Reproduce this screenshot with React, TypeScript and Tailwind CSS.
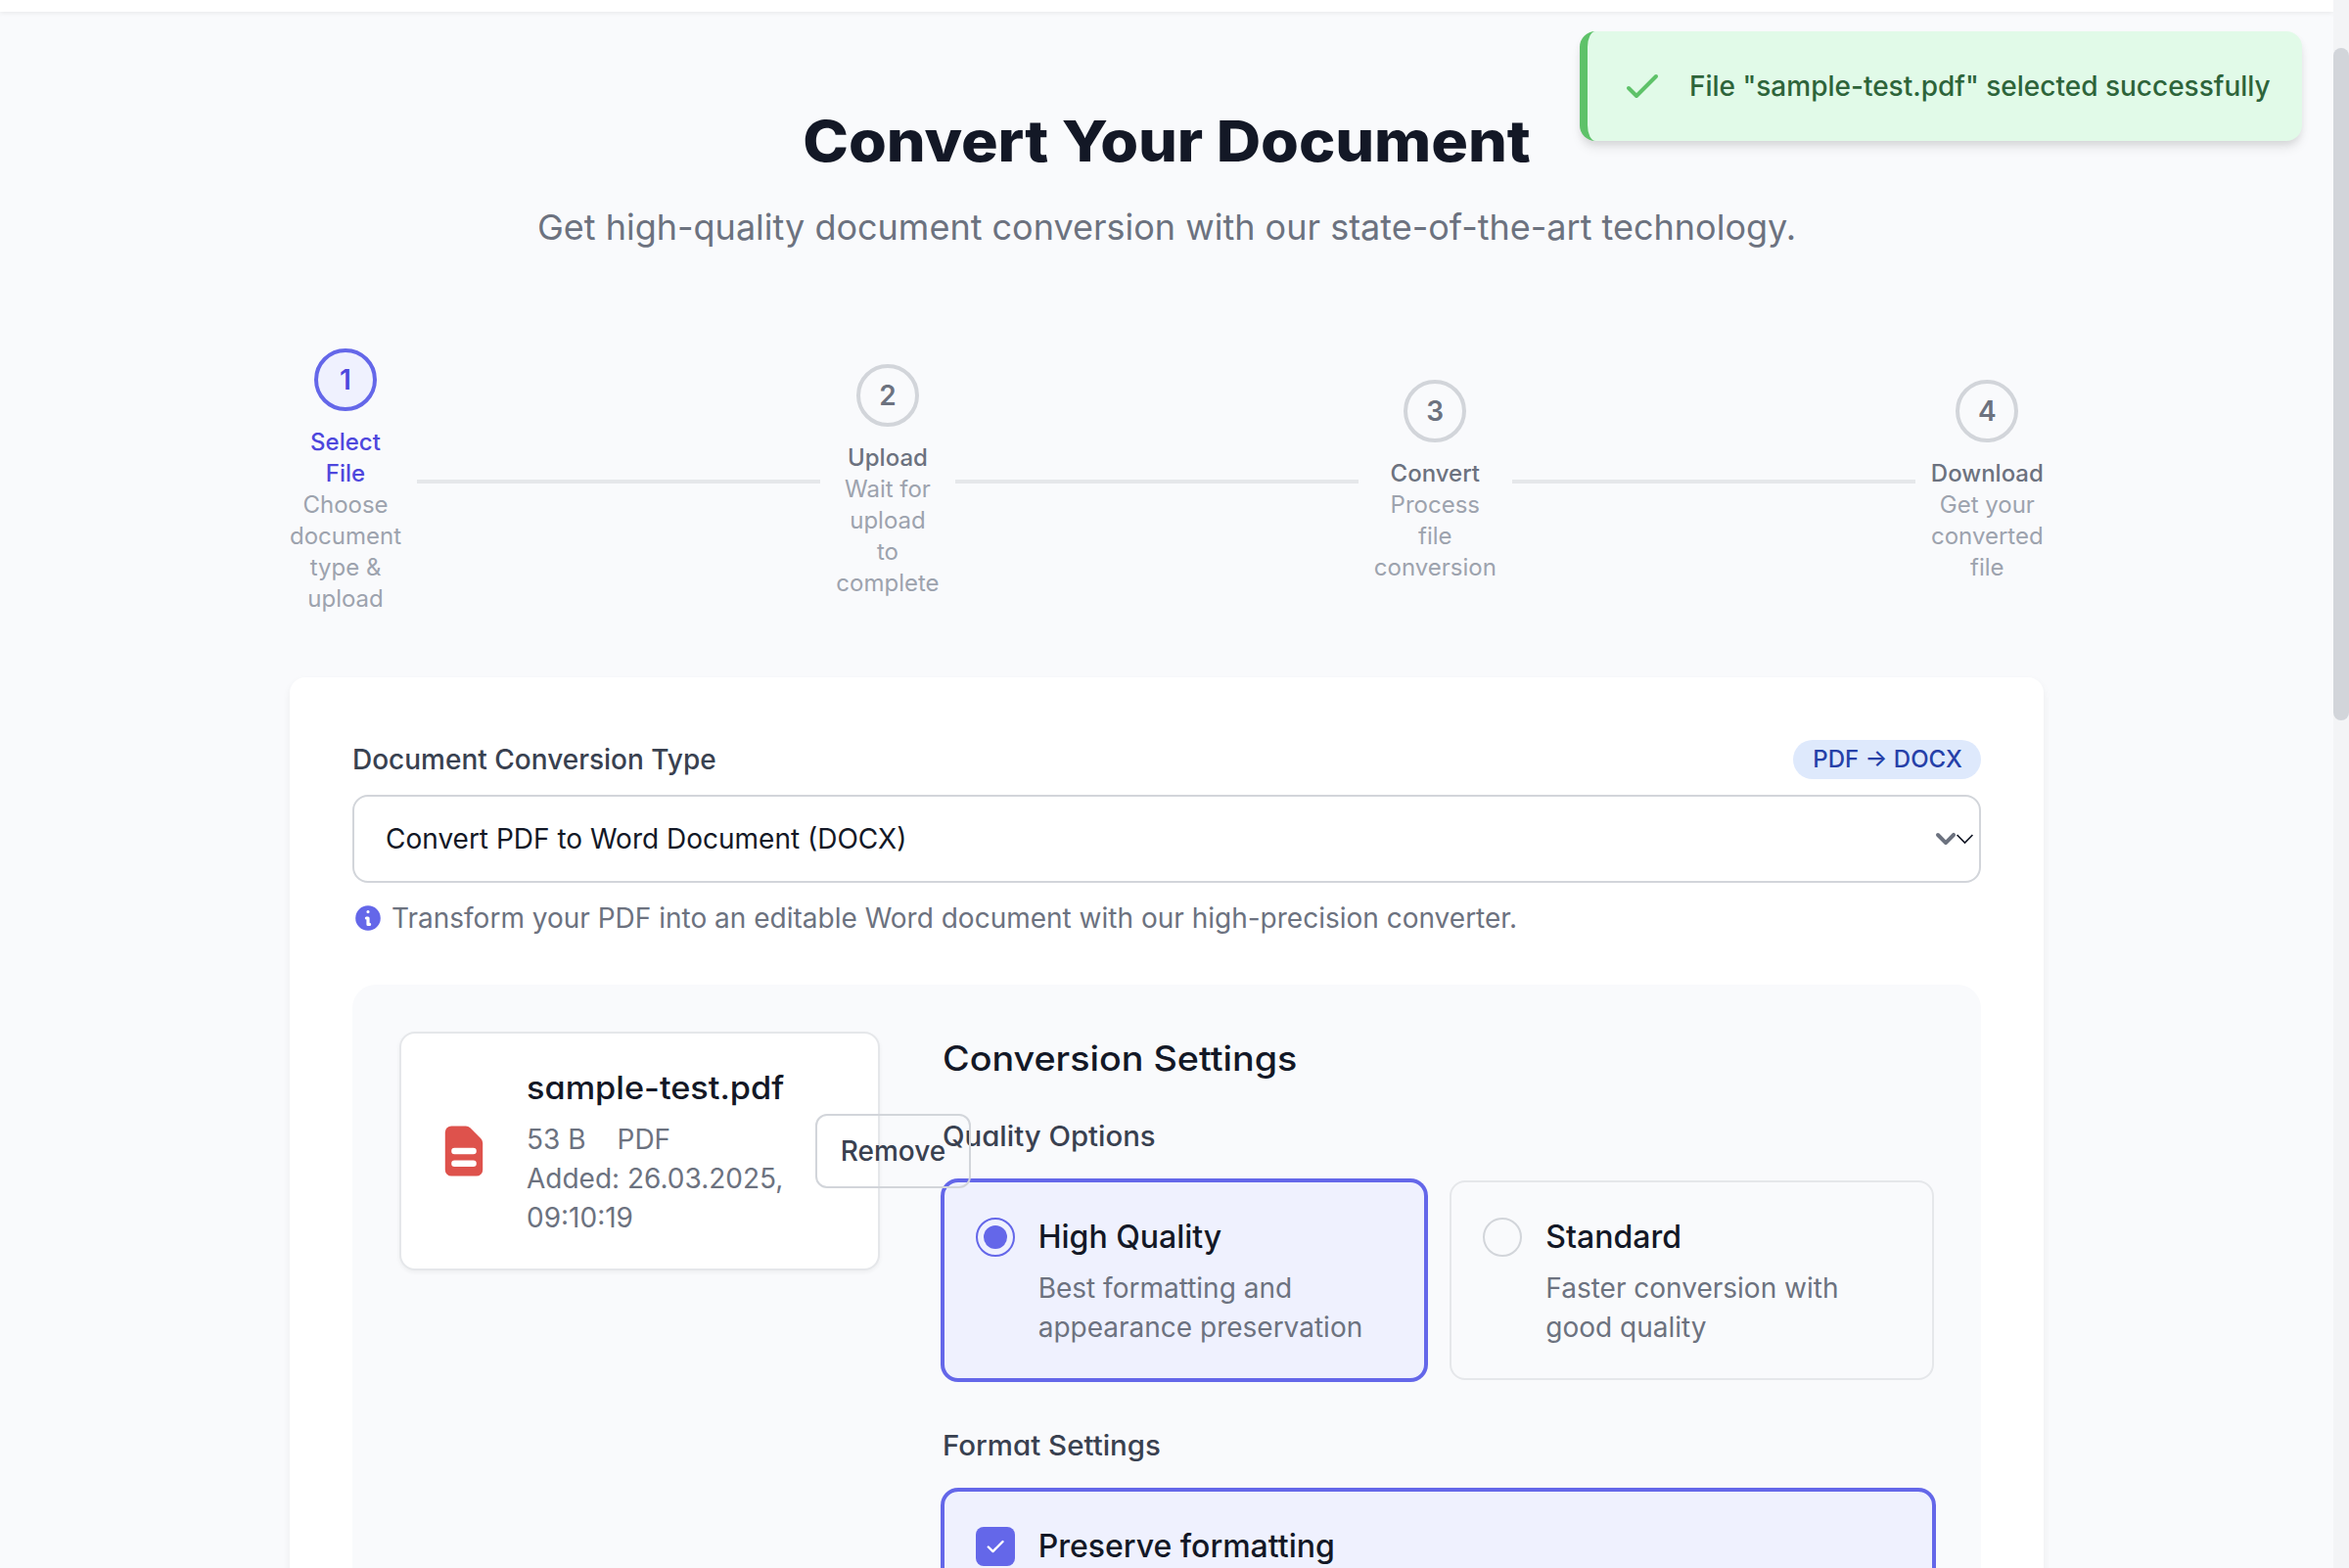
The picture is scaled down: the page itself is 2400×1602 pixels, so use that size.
import React from "react";

type Step = {
  id: number;
  label: string[];
  description: string[];
  active?: boolean;
  width: string;
};

const steps: Step[] = [
  { id: 1, label: ["Select", "File"], description: ["Choose", "document", "type &", "upload"], active: true, width: "w-[114px]" },
  { id: 2, label: ["Upload"], description: ["Wait for", "upload", "to", "complete"], width: "w-[105.9px]" },
  { id: 3, label: ["Convert"], description: ["Process", "file", "conversion"], width: "w-[124.8px]" },
  { id: 4, label: ["Download"], description: ["Get your", "converted", "file"], width: "w-[115.3px]" },
];

function Toast() {
  return (
    <div className="absolute right-12 top-8 z-20 flex h-28 w-[738px] items-center rounded-2xl border-l-8 border-[#5ec269] bg-[#e1fae8] pl-8 shadow-[0_8px_12px_-2px_rgba(0,0,0,0.1),0_4px_8px_-2px_rgba(0,0,0,0.08)]">
      <svg className="size-12 text-[#5ec269]" viewBox="0 0 24 24" fill="none" stroke="currentColor" strokeWidth="2" strokeLinecap="round" strokeLinejoin="round">
        <path d="M5 13l4 4L19 7" />
      </svg>
      <p className="ml-6 whitespace-nowrap text-[28px] font-medium leading-10 text-[#2d643a]">
        File "sample-test.pdf" selected successfully
      </p>
    </div>
  );
}

function Stepper() {
  return (
    <div className="mt-24 flex h-[272px] items-center">
      {steps.map((step, i) => (
        <React.Fragment key={step.id}>
          {i > 0 && <div className="mx-4 h-1 flex-1 bg-[#e5e7ea]" />}
          <div className={"flex shrink-0 flex-col items-center text-center text-2xl leading-8 " + step.width}>
            <div
              className={
                "mb-4 flex size-16 items-center justify-center rounded-full border-4 text-[28px] font-semibold " +
                (step.active ? "border-[#6467e9] bg-[#eff1fe] text-[#4e47dd]" : "border-[#d2d5da] text-[#6c727f]")
              }
            >
              {step.id}
            </div>
            {step.label.map((t) => (
              <div key={t} className={"whitespace-nowrap font-medium " + (step.active ? "text-[#4e47dd]" : "text-[#6c727f]")}>{t}</div>
            ))}
            {step.description.map((t) => (
              <div key={t} className="whitespace-nowrap text-[#9da3ae]">{t}</div>
            ))}
          </div>
        </React.Fragment>
      ))}
    </div>
  );
}

function ConversionType() {
  return (
    <div>
      <div className="flex h-10 items-center justify-between">
        <label className="text-[28px] font-medium leading-10 text-[#394150]">Document Conversion Type</label>
        <span className="flex h-10 w-48 items-center justify-center whitespace-nowrap rounded-full bg-[#dee9fc] pl-px text-2xl font-medium text-[#2540a8]">
          PDF → DOCX
        </span>
      </div>
      <div className="mt-4 flex h-[90px] items-center rounded-2xl border-2 border-[#d2d5da] bg-white pl-8">
        <span className="flex-1 text-[28px] leading-10 text-[#131826]">Convert PDF to Word Document (DOCX)</span>
        <svg className="size-10 text-[#6c727f]" viewBox="0 0 20 20" fill="currentColor">
          <path fillRule="evenodd" clipRule="evenodd" d="M5.293 7.293a1 1 0 011.414 0L10 10.586l3.293-3.293a1 1 0 111.414 1.414l-4 4a1 1 0 01-1.414 0l-4-4a1 1 0 010-1.414z" />
        </svg>
        <svg className="-ml-2.5 mr-1 h-6 w-5" viewBox="0 0 20 24" fill="none" stroke="#131826" strokeWidth="1.7">
          <path d="M1.6 8l7.9 8L17.4 8" />
        </svg>
      </div>
      <div className="mt-4 flex h-10 items-center">
        <svg className="size-8 text-[#6467e9]" viewBox="0 0 20 20" fill="currentColor">
          <path fillRule="evenodd" clipRule="evenodd" d="M18 10a8 8 0 11-16 0 8 8 0 0116 0zm-7-4a1 1 0 11-2 0 1 1 0 012 0zM9 9a1 1 0 000 2v3a1 1 0 001 1h1a1 1 0 100-2v-3a1 1 0 00-1-1H9z" />
        </svg>
        <p className="ml-2 whitespace-nowrap text-[28px] leading-10 text-[#6c727f]">
          Transform your PDF into an editable Word document with our high-precision converter.
        </p>
      </div>
    </div>
  );
}

function FileCard() {
  return (
    <div className="relative z-10 flex h-[244px] w-[490.67px] shrink-0 items-center rounded-2xl border-2 border-[#e5e7ea] bg-white pl-8 shadow-[0_2px_4px_rgba(0,0,0,0.05)]">
      <svg className="size-16 shrink-0 text-[#de524c]" viewBox="0 0 20 20" fill="currentColor">
        <path fillRule="evenodd" clipRule="evenodd" d="M4 4a2 2 0 012-2h4.586A2 2 0 0112 2.586L15.414 6A2 2 0 0116 7.414V16a2 2 0 01-2 2H6a2 2 0 01-2-2V4zm2 6a1 1 0 011-1h6a1 1 0 110 2H7a1 1 0 01-1-1zm1 3a1 1 0 100 2h6a1 1 0 100-2H7z" />
      </svg>
      <div className="ml-8 w-[263px] shrink-0 whitespace-nowrap text-[28px] leading-10 text-[#6c727f]">
        <h3 className="mb-2 w-fit origin-left scale-x-[1.071] text-[32px] font-medium leading-[48px] text-[#131826] [font-feature-settings:'cv11']">sample-test.pdf</h3>
        <div className="flex gap-8">
          <span>53 B</span>
          <span>PDF</span>
        </div>
        <p>Added: 26.03.2025,</p>
        <p>09:10:19</p>
      </div>
      <button className="ml-8 h-[76px] w-[159px] shrink-0 rounded-xl border-2 border-[#d2d5da] text-[28px] font-medium leading-10 text-[#394150]">
        Remove
      </button>
    </div>
  );
}

function Settings() {
  return (
    <div className="min-w-0 flex-1">
      <h2 className="w-fit origin-left scale-x-[1.077] text-[35px] font-medium leading-[54px] text-[#131826] [font-feature-settings:'cv11']">Conversion Settings</h2>
      <h3 className="mt-[33px] w-fit origin-left scale-x-[1.048] text-[28px] font-medium leading-10 text-[#394150] [font-feature-settings:'cv11']">Quality Options</h3>
      <div className="mt-[25px] grid grid-cols-2 gap-6">
        <div className="flex h-[204px] rounded-2xl border-2 border-[#6467e9] bg-[#eff1fe] p-8 pr-0 ring-2 ring-[#6467e9]">
          <div className="mt-1 flex size-10 shrink-0 items-center justify-center rounded-full border-2 border-[#6467e9]">
            <div className="size-6 rounded-full bg-[#6467e9]" />
          </div>
          <div className="ml-6 whitespace-nowrap text-[28px] leading-10 text-[#6c727f]">
            <h4 className="mb-2 text-[32px] font-medium leading-[48px] text-[#131826]">High Quality</h4>
            <p>Best formatting and</p>
            <p>appearance preservation</p>
          </div>
        </div>
        <div className="flex h-[204px] rounded-2xl border-2 border-[#e5e7ea] p-8 pr-0">
          <div className="mt-1 size-10 shrink-0 rounded-full border-2 border-[#d2d5da]" />
          <div className="ml-6 whitespace-nowrap text-[28px] leading-10 text-[#6c727f]">
            <h4 className="mb-2 text-[32px] font-medium leading-[48px] text-[#131826]">Standard</h4>
            <p>Faster conversion with</p>
            <p>good quality</p>
          </div>
        </div>
      </div>
      <h3 className="mt-[47px] w-fit origin-left scale-x-[1.052] text-[28px] font-medium leading-10 text-[#394150] [font-feature-settings:'cv11']">Format Settings</h3>
      <div className="mt-[25px] flex h-[164px] rounded-2xl border-2 border-[#6467e9] bg-[#eff1fe] p-8 ring-2 ring-[#6467e9]">
        <div className="mt-1 flex size-10 shrink-0 items-center justify-center rounded-lg bg-[#6467e9]">
          <svg className="size-10" viewBox="0 0 40 40" fill="none" stroke="#fff" strokeWidth="2.4" strokeLinecap="round" strokeLinejoin="round">
            <path d="M12.8 20.5l4.7 4.6L27.5 15" />
          </svg>
        </div>
        <h4 className="ml-6 text-[32px] font-medium leading-[48px] text-[#131826]">Preserve formatting</h4>
      </div>
    </div>
  );
}

export default function App() {
  return (
    <div className="relative flex h-[1602px] w-[2400px] overflow-hidden bg-[#f9fafc] font-['Inter',sans-serif]">
      <Toast />
      <div className="flex min-w-0 flex-1 flex-col items-center">
        <header className="h-3 w-full shrink-0 bg-white shadow-[0_2px_4px_rgba(0,0,0,0.06)]" />
        <main className="w-[1792px] pt-24">
          <h1 className="scale-x-[1.084] whitespace-nowrap text-center text-[58px] font-extrabold leading-[72px] tracking-[-0.1px] text-[#131826]">Convert Your Document</h1>
          <p className="mt-6 whitespace-nowrap text-center text-4xl leading-[56px] text-[#6c727f]">
            Get high-quality document conversion with our state-of-the-art technology.
          </p>
          <Stepper />
          <section className="mt-16 h-[1200px] rounded-2xl bg-white p-16 shadow-[0_4px_8px_rgba(0,0,0,0.06)]">
            <ConversionType />
            <div className="mt-12 flex h-[900px] items-start gap-16 rounded-3xl bg-[#f9fafc] p-12">
              <FileCard />
              <Settings />
            </div>
          </section>
        </main>
      </div>
      <div className="w-4 shrink-0 bg-[#f3f4f6] pt-[49px]">
        <div className="h-[687px] rounded-full bg-[#d2d5da]" />
      </div>
    </div>
  );
}
